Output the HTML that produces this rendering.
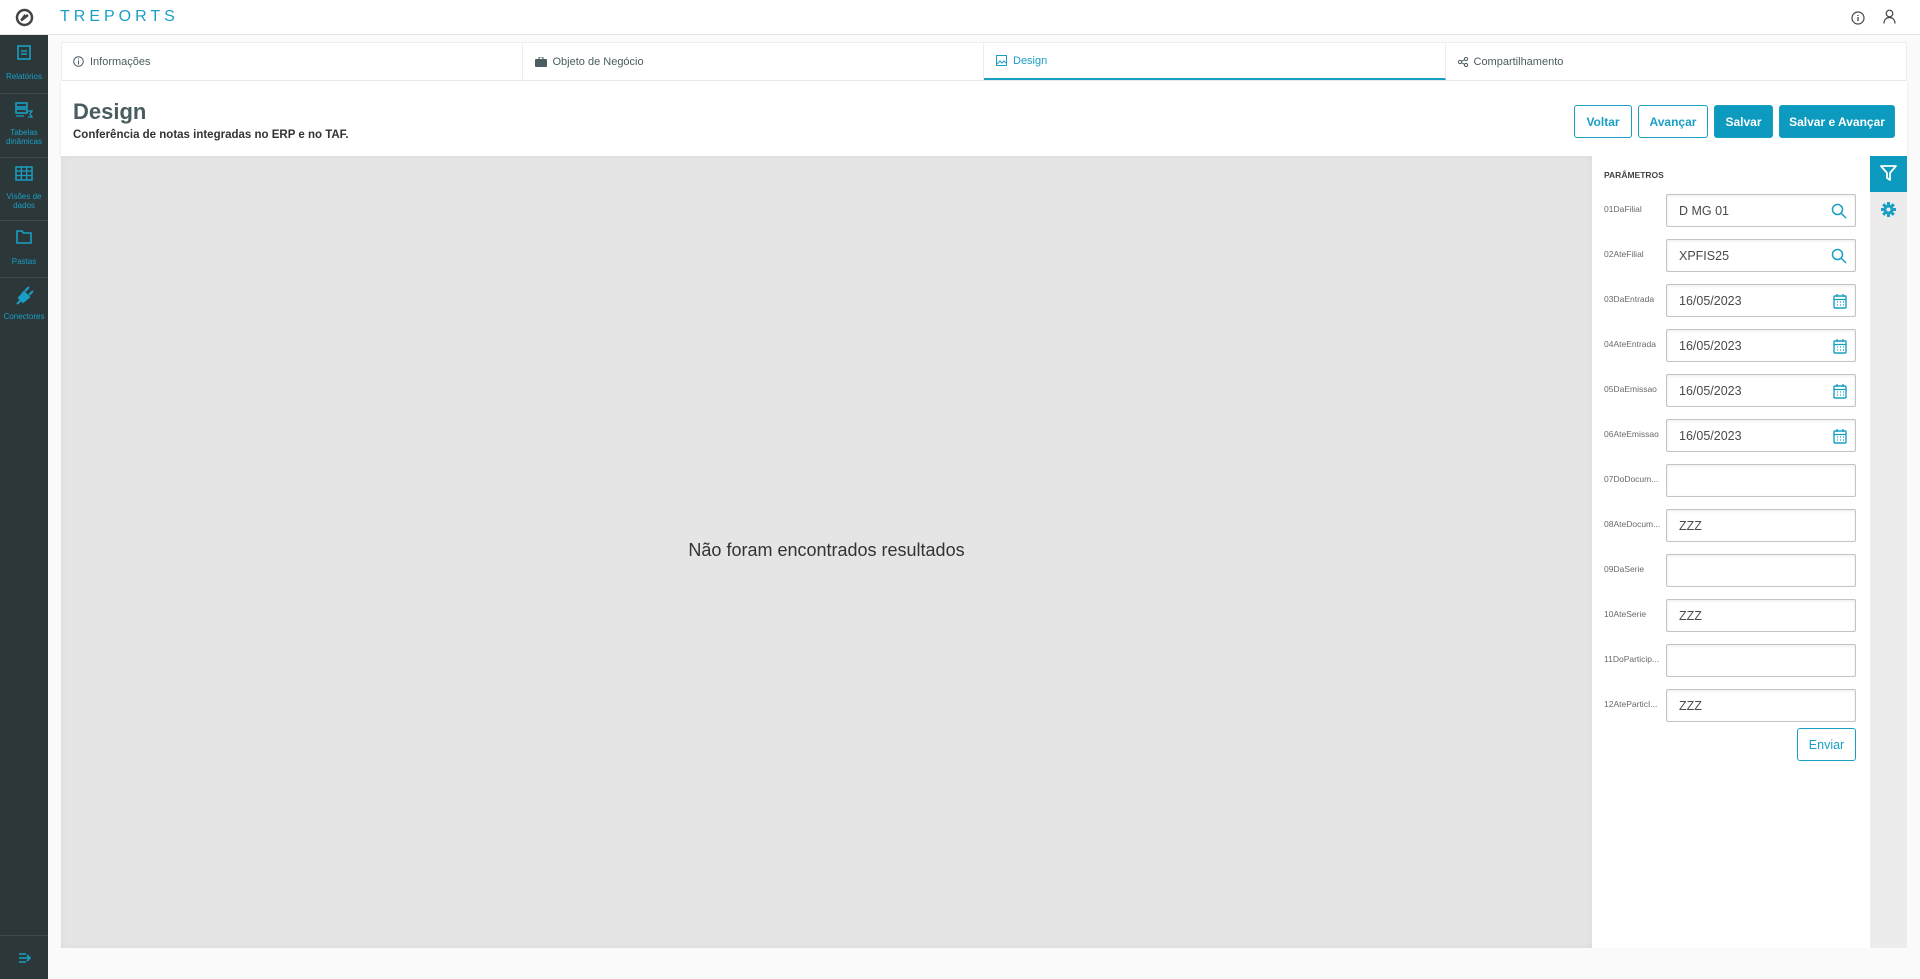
<!DOCTYPE html>
<html><head><meta charset="utf-8"><style>
*{box-sizing:border-box;margin:0;padding:0}
body{width:1920px;height:979px;overflow:hidden;background:#fafafa;font-family:"Liberation Sans",sans-serif;position:relative}
.abs{position:absolute}
#top{left:0;top:0;width:1920px;height:35px;background:#fff;border-bottom:1px solid #e4e4e4}
#side{left:0;top:35px;width:48px;height:944px;background:#2c3739}
.si{position:absolute;left:0;width:48px;text-align:center;color:#1a9fc4;font-size:8px;line-height:9px}
.div{position:absolute;left:0;width:48px;height:1px;background:#3e4a4c}
#tabs{left:61px;top:42px;width:1846px;height:39px;background:#fff;border:1px solid #ececec;display:flex}
.tab{flex:1;border-right:1px solid #ececec;font-size:11px;color:#4a5c60;padding:0 12px;display:flex;align-items:center;gap:6px}
.tab.act{color:#1a9fc4;border-bottom:2px solid #1a9fc4}
#hdr{left:61px;top:81px;width:1846px;height:75px;background:#fff;box-shadow:0 2px 4px rgba(0,0,0,.08)}
.btn{position:absolute;top:105px;height:33px;border:1px solid #1a9fc4;border-radius:3px;font-size:12px;font-weight:bold;color:#1a9fc4;background:#fff;display:flex;align-items:center;justify-content:center}
.btn.f{background:#0c9abe;color:#fff}
#gray{left:61px;top:156px;width:1531px;height:792px;background:#e5e5e5;box-shadow:inset 0 0 8px rgba(0,0,0,.05)}
#panel{left:1592px;top:156px;width:278px;height:792px;background:#fff}
#strip{left:1870px;top:156px;width:37px;height:792px;background:#ececec}
.lab{position:absolute;left:12px;font-size:8.5px;color:#6a6a6a}
.inp{position:absolute;left:74px;width:190px;height:33px;border:1px solid #c4c4c4;border-radius:2px;box-shadow:inset 0 1px 3px rgba(0,0,0,.08);font-size:12.5px;color:#4a4a4a;padding-left:12px;display:flex;align-items:center}
.inp svg{position:absolute;right:8px;top:8px}
</style></head><body>
<div id="top" class="abs">
<svg class="abs" style="left:15px;top:8px" width="19" height="19" viewBox="0 0 19 19"><circle cx="9.5" cy="9.5" r="7.5" fill="none" stroke="#444" stroke-width="2.5"/><path d="M5 12 L9.5 6 L12 8.5 Z" fill="#444"/><path d="M6 12.5 L13 7" stroke="#444" stroke-width="2.5"/></svg>
<div class="abs" style="left:60px;top:8px;font-size:16px;letter-spacing:4px;color:#1a9fc4">TREPORTS</div>
<svg class="abs" style="left:1851px;top:11px" width="14" height="14" viewBox="0 0 14 14"><circle cx="7" cy="7" r="6" fill="none" stroke="#444" stroke-width="1.2"/><path d="M7 6v4M7 4v1" stroke="#444" stroke-width="1.3"/></svg>
<svg class="abs" style="left:1883px;top:9px" width="13" height="15" viewBox="0 0 13 15"><circle cx="6.5" cy="4.5" r="3.3" fill="none" stroke="#444" stroke-width="1.2"/><path d="M1 14.5c0-4 2.5-6 5.5-6s5.5 2 5.5 6" fill="none" stroke="#444" stroke-width="1.2"/></svg>
</div>
<div id="side" class="abs">
<svg class="abs" style="left:16px;top:10px" width="16" height="16" viewBox="0 0 16 16"><rect x="2" y="1" width="12" height="13" fill="none" stroke="#1a9fc4" stroke-width="1.6"/><path d="M5 6h6M5 9h6" stroke="#1a9fc4" stroke-width="1.4"/></svg>
<div class="si" style="top:37px">Relatórios</div><div class="div" style="top:58px"></div>
<svg class="abs" style="left:15px;top:67px" width="18" height="16" viewBox="0 0 18 16"><rect x="1" y="1" width="11" height="4" fill="none" stroke="#1a9fc4" stroke-width="1.6"/><rect x="1" y="7" width="11" height="4" fill="none" stroke="#1a9fc4" stroke-width="1.6"/><path d="M1 14h8M13 9h4l-2 3 2 3h-4" fill="none" stroke="#1a9fc4" stroke-width="1.2"/></svg>
<div class="si" style="top:93px">Tabelas<br>dinâmicas</div><div class="div" style="top:122px"></div>
<svg class="abs" style="left:15px;top:131px" width="18" height="15" viewBox="0 0 18 15"><rect x="1" y="1" width="16" height="13" fill="none" stroke="#1a9fc4" stroke-width="1.5"/><path d="M1 5h16M1 9.5h16M6.3 1v13M11.7 1v13" stroke="#1a9fc4" stroke-width="1.3"/></svg>
<div class="si" style="top:157px">Visões de<br>dados</div><div class="div" style="top:185px"></div>
<svg class="abs" style="left:16px;top:194px" width="16" height="15" viewBox="0 0 16 15"><path d="M1 2h5l1.5 2H15v10H1z" fill="none" stroke="#1a9fc4" stroke-width="1.6"/></svg>
<div class="si" style="top:222px">Pastas</div><div class="div" style="top:242px"></div>
<svg class="abs" style="left:14px;top:251px" width="20" height="20" viewBox="0 0 20 20"><path d="M3 18l4-4M7 14l-2-2 5-6 5 5-6 5z" fill="#1a9fc4" stroke="#1a9fc4" stroke-width="2"/><path d="M11 5l4-4M15 9l4-4" stroke="#1a9fc4" stroke-width="2"/></svg>
<div class="si" style="top:277px">Conectores</div>
<div class="div" style="top:900px"></div>
<svg class="abs" style="left:18px;top:918px" width="14" height="10" viewBox="0 0 14 10"><path d="M1 1h7M1 5h10M1 9h7M9 2l3 3-3 3" fill="none" stroke="#1a9fc4" stroke-width="1.6"/></svg>
</div>
<div id="tabs" class="abs">
<div class="tab" style="padding-left:11px"><svg width="11" height="11"><circle cx="5.5" cy="5.5" r="4.8" fill="none" stroke="#4a5c60"/><path d="M5.5 4.5v4M5.5 2.5v1" stroke="#4a5c60"/></svg>Informações</div>
<div class="tab"><svg width="12" height="10"><rect x="0" y="2" width="12" height="8" rx="1" fill="#4a5c60"/><rect x="4" y="0" width="4" height="3" fill="none" stroke="#4a5c60"/></svg>Objeto de Negócio</div>
<div class="tab act"><svg width="11" height="11"><rect x="0.5" y="0.5" width="10" height="10" fill="none" stroke="#1a9fc4"/><path d="M1 9l3-3 2 2 2-2 2 2" fill="none" stroke="#1a9fc4"/></svg>Design</div>
<div class="tab" style="border-right:none"><svg width="10" height="10"><circle cx="2" cy="5" r="1.6" fill="none" stroke="#4a5c60"/><circle cx="8" cy="2" r="1.6" fill="none" stroke="#4a5c60"/><circle cx="8" cy="8" r="1.6" fill="none" stroke="#4a5c60"/><path d="M3.5 4.3L6.5 2.7M3.5 5.7l3 1.6" stroke="#4a5c60"/></svg>Compartilhamento</div>
</div>
<div id="hdr" class="abs">
<div class="abs" style="left:12px;top:18px;font-size:22px;font-weight:bold;color:#4a5c60">Design</div>
<div class="abs" style="left:12px;top:48px;font-size:11.5px;font-weight:bold;color:#333">Conferência de notas integradas no ERP e no TAF.</div>
</div>
<div class="btn" style="left:1574px;width:58px">Voltar</div>
<div class="btn" style="left:1638px;width:70px">Avançar</div>
<div class="btn f" style="left:1714px;width:59px">Salvar</div>
<div class="btn f" style="left:1779px;width:116px">Salvar e Avançar</div>
<div id="gray" class="abs"><div class="abs" style="left:0;width:1531px;top:384px;text-align:center;font-size:18px;color:#333">Não foram encontrados resultados</div></div>
<div id="panel" class="abs">
<div class="abs" style="left:12px;top:14px;font-size:8.5px;font-weight:bold;color:#444">PARÂMETROS</div>
<div class="lab" style="top:48px">01DaFilial</div><div class="inp" style="top:38px">D MG 01<svg width="16" height="16"><circle cx="6.5" cy="6.5" r="5" fill="none" stroke="#1a9fc4" stroke-width="1.5"/><path d="M10 10l5 5" stroke="#1a9fc4" stroke-width="1.5"/></svg></div>
<div class="lab" style="top:93px">02AteFilial</div><div class="inp" style="top:83px">XPFIS25<svg width="16" height="16"><circle cx="6.5" cy="6.5" r="5" fill="none" stroke="#1a9fc4" stroke-width="1.5"/><path d="M10 10l5 5" stroke="#1a9fc4" stroke-width="1.5"/></svg></div>
<div class="lab" style="top:138px">03DaEntrada</div><div class="inp" style="top:128px">16/05/2023<svg width="14" height="16"><rect x="1" y="3" width="12" height="12" rx="1" fill="none" stroke="#1a9fc4" stroke-width="1.4"/><path d="M1 6.5h12M4 1v3M10 1v3M4 9h1M7 9h1M10 9h1M4 12h1M7 12h1M10 12h1" stroke="#1a9fc4" stroke-width="1.3"/></svg></div>
<div class="lab" style="top:183px">04AteEntrada</div><div class="inp" style="top:173px">16/05/2023<svg width="14" height="16"><rect x="1" y="3" width="12" height="12" rx="1" fill="none" stroke="#1a9fc4" stroke-width="1.4"/><path d="M1 6.5h12M4 1v3M10 1v3M4 9h1M7 9h1M10 9h1M4 12h1M7 12h1M10 12h1" stroke="#1a9fc4" stroke-width="1.3"/></svg></div>
<div class="lab" style="top:228px">05DaEmissao</div><div class="inp" style="top:218px">16/05/2023<svg width="14" height="16"><rect x="1" y="3" width="12" height="12" rx="1" fill="none" stroke="#1a9fc4" stroke-width="1.4"/><path d="M1 6.5h12M4 1v3M10 1v3M4 9h1M7 9h1M10 9h1M4 12h1M7 12h1M10 12h1" stroke="#1a9fc4" stroke-width="1.3"/></svg></div>
<div class="lab" style="top:273px">06AteEmissao</div><div class="inp" style="top:263px">16/05/2023<svg width="14" height="16"><rect x="1" y="3" width="12" height="12" rx="1" fill="none" stroke="#1a9fc4" stroke-width="1.4"/><path d="M1 6.5h12M4 1v3M10 1v3M4 9h1M7 9h1M10 9h1M4 12h1M7 12h1M10 12h1" stroke="#1a9fc4" stroke-width="1.3"/></svg></div>
<div class="lab" style="top:318px">07DoDocum...</div><div class="inp" style="top:308px"></div>
<div class="lab" style="top:363px">08AteDocum...</div><div class="inp" style="top:353px">ZZZ</div>
<div class="lab" style="top:408px">09DaSerie</div><div class="inp" style="top:398px"></div>
<div class="lab" style="top:453px">10AteSerie</div><div class="inp" style="top:443px">ZZZ</div>
<div class="lab" style="top:498px">11DoParticip...</div><div class="inp" style="top:488px"></div>
<div class="lab" style="top:543px">12AteParticI...</div><div class="inp" style="top:533px">ZZZ</div>
<div class="btn" style="left:205px;top:572px;width:59px;font-weight:normal;font-size:12.5px">Enviar</div>
</div>
<div id="strip" class="abs">
<div class="abs" style="left:0;top:0;width:37px;height:36px;background:#0c9abe"><svg style="position:absolute;left:10px;top:9px" width="17" height="17" viewBox="0 0 17 17"><path d="M1 1h15l-6 7v7l-3-2V8z" fill="none" stroke="#fff" stroke-width="1.8" stroke-linejoin="round"/></svg></div>
<svg class="abs" style="left:10px;top:45px" width="17" height="17" viewBox="0 0 17 17"><g stroke="#1a9fc4" stroke-width="3"><path d="M8.5 1v15M1 8.5h15M3.2 3.2l10.6 10.6M13.8 3.2L3.2 13.8"/></g><circle cx="8.5" cy="8.5" r="5" fill="#1a9fc4"/><circle cx="8.5" cy="8.5" r="2" fill="#ececec"/></svg>
</div>
</body></html>
